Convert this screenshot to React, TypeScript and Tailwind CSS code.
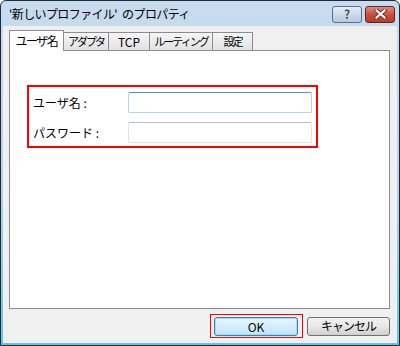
import React from "react"

const font = { fontFamily: '"Noto Sans CJK JP", "Liberation Sans", sans-serif' }

const tabs = [
  { label: "ユーザ名", w: "w-[55px]", active: true },
  { label: "アダプタ", w: "w-[45px]" },
  { label: "TCP", w: "w-[41px]", latin: true },
  { label: "ルーティング", w: "w-[63px]" },
  { label: "設定", w: "w-[40px]" },
]

function TitleButtons() {
  return (
    <div className="flex items-center gap-[3px]">
      <div className="flex h-[17px] w-[30px] items-center justify-center rounded-[3px] border border-[#5a6e86] bg-gradient-to-b from-[#e3edf8] to-[#b3c8e0]">
        <span className="text-[12px] font-bold leading-none text-[#4a4a4a] [text-shadow:0_0_1px_#fff]">?</span>
      </div>
      <div className="flex h-[17px] w-[30px] items-center justify-center rounded-[3px] border border-[#5b2a24] bg-gradient-to-b from-[#e0897c] via-[#c8503f] to-[#b83a28]">
        <svg width="13" height="10" viewBox="0 0 13 10">
          <path d="M2.5 1.5 L10.5 8.5 M10.5 1.5 L2.5 8.5" stroke="#6b2e26" strokeWidth="4" strokeLinecap="square" />
          <path d="M2.5 1.5 L10.5 8.5 M10.5 1.5 L2.5 8.5" stroke="#ffffff" strokeWidth="2.2" strokeLinecap="square" />
        </svg>
      </div>
    </div>
  )
}

function Field({ label, focused }: { label: string; focused?: boolean }) {
  return (
    <div className="flex items-center">
      <span className="w-[95px] whitespace-nowrap text-[12px] text-black">{label}</span>
      <div
        className={
          focused
            ? "h-[21px] w-[184px] rounded-[2px] border border-[#b5d3ea] border-t-[#5d8fbd] bg-white"
            : "h-[21px] w-[184px] rounded-[2px] border border-[#e0e3ea] border-t-[#b9bcc4] bg-white"
        }
      />
    </div>
  )
}

export default function App() {
  return (
    <div className="h-[346px] w-[400px] bg-white" style={font}>
      <div className="flex h-full flex-col rounded-t-[6px] border border-[#1f2a36] bg-gradient-to-b from-[#c8dcf0] via-[#b9d1e9] to-[#5cc8e6] px-[2px] pb-[2px]">
        <div className="flex h-[25px] shrink-0 items-center justify-between pl-[6px] pr-[2px] pt-[1px]">
          <span className="flex whitespace-nowrap text-[12px] tracking-[-0.6px] text-black">
            <span>'新しいプロファイル'</span>
            <span className="ml-[5px]">のプロパティ</span>
          </span>
          <TitleButtons />
        </div>
        <div className="flex flex-1 flex-col bg-[#f0f0f0] pl-[6px] pr-[7px] pt-[4px]">
          <div className="flex h-[20px] items-end">
            {tabs.map((t) =>
              t.active ? (
                <div
                  key={t.label}
                  className={`relative z-10 -mb-px flex h-[21px] ${t.w} items-center justify-center whitespace-nowrap border border-b-0 border-[#898c95] bg-white text-[12px] tracking-[-1.5px] text-black`}
                >
                  {t.label}
                </div>
              ) : (
                <div
                  key={t.label}
                  className={`flex h-[18px] ${t.w} items-center justify-center whitespace-nowrap border border-b-0 border-l-0 border-[#898c95] bg-gradient-to-b from-[#f6f6f6] to-[#e2e2e2] text-black ${
                    t.latin ? "text-[12px]" : "text-[11px] tracking-[-2px]"
                  }`}
                >
                  {t.label}
                </div>
              )
            )}
          </div>
          <div className="h-[259px] border border-[#898c95] bg-white pl-[17px] pt-[34px]">
            <div className="w-[291px] bg-[#ff0000] p-[2px]">
              <div className="flex flex-col gap-[9px] bg-white pb-[3px] pl-[4px] pt-[5px]">
                <Field label="ユーザ名 :" focused />
                <Field label="パスワード :" />
              </div>
            </div>
          </div>
          <div className="mt-[5px] flex items-center justify-end gap-[4px]">
            <div className="bg-[#ff0000] p-px">
              <div className="bg-[#f0f0f0] pb-px pl-[3px] pr-[4px] pt-[2px]">
                <button className="flex h-[19px] w-[84px] items-center justify-center rounded-[3px] border border-[#3c7fb1] bg-gradient-to-b from-[#eaf6fd] to-[#bee6fd] text-[12px] text-black shadow-[inset_0_0_0_1px_#9fdaf9]">
                  OK
                </button>
              </div>
            </div>
            <button className="flex h-[19px] w-[83px] items-center justify-center rounded-[3px] border border-[#707070] bg-gradient-to-b from-[#f2f2f2] via-[#e8e8e8] to-[#cfcfcf] text-[12px] tracking-[-1px] text-black">
              キャンセル
            </button>
          </div>
        </div>
      </div>
    </div>
  )
}
